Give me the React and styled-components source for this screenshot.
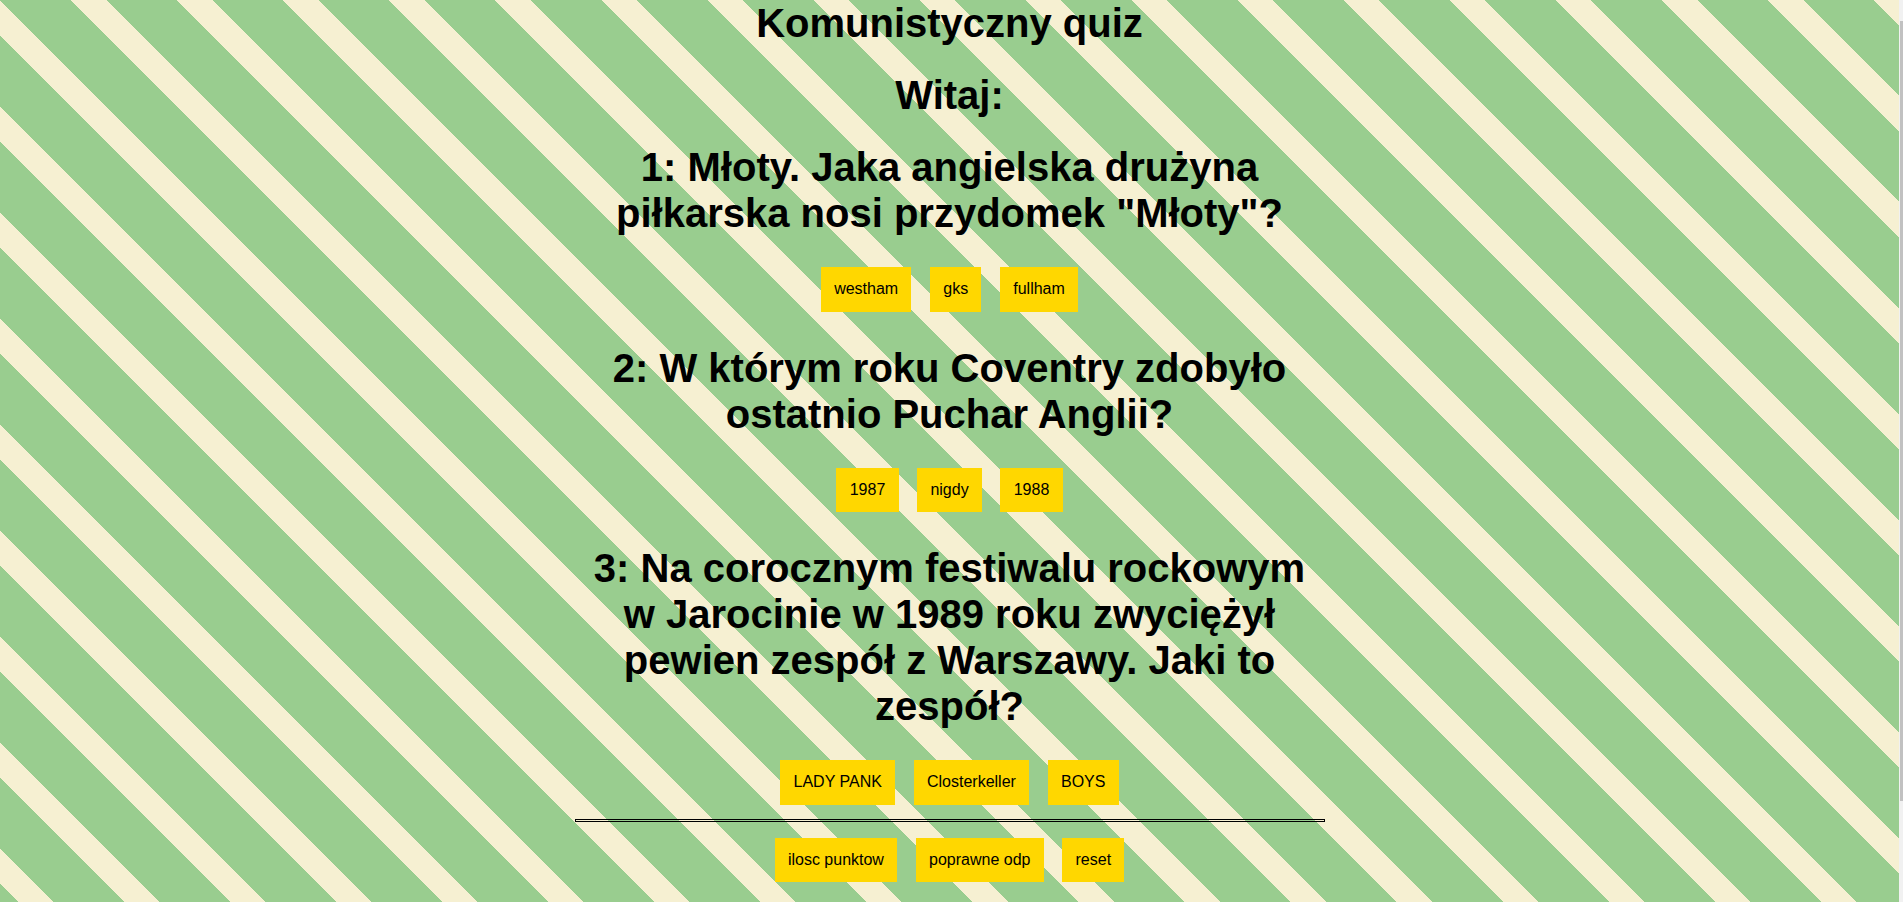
import React from 'react'
import styled, { createGlobalStyle } from 'styled-components'

const GlobalStyle = createGlobalStyle`
  html, body {
    margin: 0;
    padding: 0;
  }
  body {
    font-family: "Liberation Sans", Arial, sans-serif;
    color: #000;
  }
`;

const Page = styled.div`
  display: flex;
  min-height: 100vh;
`;

const Stage = styled.div`
  flex: 1;
  display: flex;
  justify-content: center;
  background: repeating-linear-gradient(
    45deg,
    #99cd8f 0 12.8px,
    #f6f0d2 12.8px 37.8px,
    #99cd8f 37.8px 75px
  );
`;

// fake scrollbar strip on the right edge
const Track = styled.div`
  width: 4px;
  background: #f1f1f1;
  padding-top: 21px;
  box-sizing: border-box;
`;

const Thumb = styled.div`
  margin-left: 1px;
  height: 780px;
  background: #c1c1c1;
`;

const Quiz = styled.main`
  width: 750px;
  display: flex;
  flex-direction: column;
  text-align: center;
`;

const Heading = styled.h1`
  font-size: 40px;
  line-height: 46px;
  font-weight: bold;
  margin: 0 0 ${(p) => p.$gap ?? 31}px;
`;

const Question = styled.section`
  margin-bottom: ${(p) => (p.$last ? 0 : 33)}px;
`;

const Row = styled.div`
  display: flex;
  justify-content: center;
  gap: 18.5px;
`;

const Button = styled.button`
  background-color: #ffd700;
  border: none;
  padding: 13.3px;
  font-family: "Liberation Sans", Arial, sans-serif;
  font-size: 16px;
  line-height: normal;
  color: #000;
  cursor: pointer;
`;

const Divider = styled.hr`
  height: 1px;
  margin: 14px 0 16px;
  border: 1px solid #000;
`;

const questions = [
  {
    text: '1: Młoty. Jaka angielska drużyna piłkarska nosi przydomek "Młoty"?',
    answers: ['westham', 'gks', 'fullham'],
  },
  {
    text: '2: W którym roku Coventry zdobyło ostatnio Puchar Anglii?',
    answers: ['1987', 'nigdy', '1988'],
  },
  {
    text: '3: Na corocznym festiwalu rockowym w Jarocinie w 1989 roku zwyciężył pewien zespół z Warszawy. Jaki to zespół?',
    answers: ['LADY PANK', 'Closterkeller', 'BOYS'],
  },
]

const App = () => {
  return (
    <Page>
      <GlobalStyle />
      <Stage>
        <Quiz>
          <Heading $gap={26}>Komunistyczny quiz</Heading>
          <Heading $gap={26}>Witaj:</Heading>
          {questions.map((q, i) => (
            <Question key={i} $last={i === questions.length - 1}>
              <Heading>{q.text}</Heading>
              <Row>
                {q.answers.map((a) => (
                  <Button key={a}>{a}</Button>
                ))}
              </Row>
            </Question>
          ))}
          <Divider />
          <Row>
            <Button>ilosc punktow</Button>
            <Button>poprawne odp</Button>
            <Button>reset</Button>
          </Row>
        </Quiz>
      </Stage>
      <Track>
        <Thumb />
      </Track>
    </Page>
  )
}

export default App
